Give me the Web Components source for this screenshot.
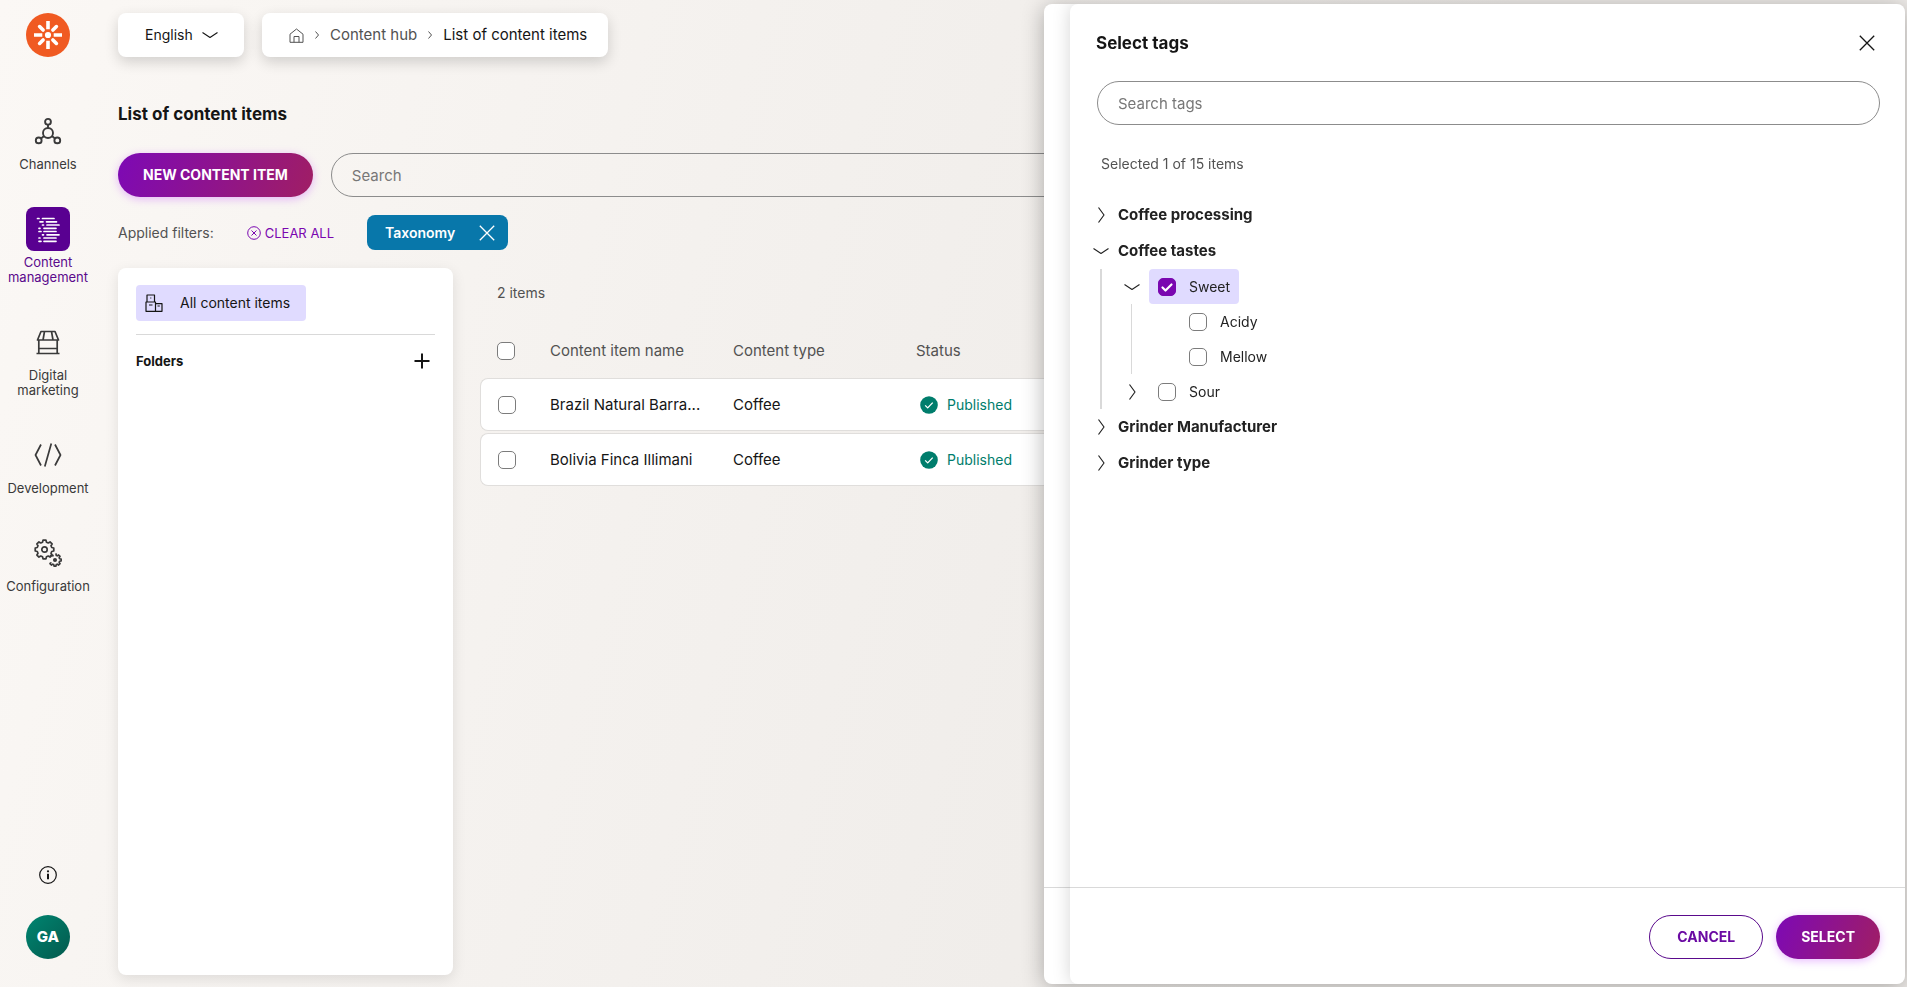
<!DOCTYPE html>
<html lang="en">
<head>
<meta charset="utf-8">
<meta name="viewport" content="width=device-width, initial-scale=1">
<title>List of content items</title>
<style>
    html, body {
        height: 100%;
        margin: 0;
    }
    body {
        --purple: #7a07b0;
        --purple-dark: #5a0a8c;
        --purple-light: #e0dbff;
        --action: linear-gradient(110deg, #7d09b5, #a01e64);
        --text: #151515;
        --text-soft: #525252;
        --line: #d9d9d9;
        --outline: #8c8c8c;
        font: 14px/20px Inter, "Liberation Sans", sans-serif;
        color: var(--text);
        background: linear-gradient(105deg, #fbf8f5, #f4f1ee 35%, #eeebe8 70%);
    }
</style>
</head>
<body>
<app-shell>
    <nav-rail slot="nav">
        <nav-item icon="channels">Channels</nav-item>
        <nav-item icon="content" active>Content management</nav-item>
        <nav-item icon="store">Digital marketing</nav-item>
        <nav-item icon="code">Development</nav-item>
        <nav-item icon="gears">Configuration</nav-item>
        <user-badge slot="bottom">GA</user-badge>
    </nav-rail>

    <top-bar slot="top"></top-bar>
    <span slot="title">List of content items</span>
    <action-button slot="tools">NEW CONTENT ITEM</action-button>
    <search-box slot="tools" label="Search"></search-box>
    <filter-bar slot="filters">
        <filter-chip>Taxonomy</filter-chip>
    </filter-bar>
    <folder-panel slot="content"></folder-panel>
    <content-table slot="content"></content-table>

    <side-drawer slot="drawer">
        <span slot="title">Select tags</span>
        <search-box slot="search" label="Search tags"></search-box>
        <span slot="status">Selected 1 of 15 items</span>
        <tree-node label="Coffee processing" closed></tree-node>
        <tree-node label="Coffee tastes">
            <tree-node label="Sweet" selectable checked>
                <tree-node label="Acidy" selectable leaf></tree-node>
                <tree-node label="Mellow" selectable leaf></tree-node>
            </tree-node>
            <tree-node label="Sour" selectable closed></tree-node>
        </tree-node>
        <tree-node label="Grinder Manufacturer" closed></tree-node>
        <tree-node label="Grinder type" closed></tree-node>
        <action-button slot="footer" kind="outline">CANCEL</action-button>
        <action-button slot="footer">SELECT</action-button>
    </side-drawer>
</app-shell>

<script>
// Outline of a cog wheel, flat teeth, centred on cx/cy
const gearPath = (cx, cy, outer, inner, teeth) => {
    const points = [];
    const step = Math.PI * 2 / teeth;
    for(let i = 0; i < teeth; i++){
        [[-0.34, inner], [-0.2, outer], [0.2, outer], [0.34, inner]].forEach(([shift, radius]) => {
            const angle = (i + shift) * step;
            points.push(`${(cx + Math.sin(angle) * radius).toFixed(2)} ${(cy - Math.cos(angle) * radius).toFixed(2)}`);
        });
    }
    return `M${points.join('L')}Z`;
};

const svg = (size, body, stroke=1, viewBox=`0 0 ${size} ${size}`) => `
<svg width="${size}" height="${size}" viewBox="${viewBox}" fill="none" stroke="currentColor"
    stroke-width="${stroke}" stroke-linejoin="round" aria-hidden="true">${body}</svg>`;

const icons = {
    logo: svg(44, `
        <circle cx="22" cy="22" r="22" fill="#f05a22" stroke="none"/>
        <circle cx="22" cy="22" r="3.1" fill="#fff" stroke="none"/>
        <g stroke="#fff" stroke-width="3.6">
            <path d="M22 8v8.3M22 27.700v8.300M8 22h8.300M27.700 22h8.300"/>
            <path stroke-linecap="round" d="M13.600 13.600l3.500 3.500M26.900 26.900l3.500 3.500M13.600 30.400l3.500-3.500M26.900 17.100l3.500-3.500"/>
        </g>`),
    channels: svg(28, `
        <circle cx="14" cy="16" r="5"/><circle cx="14" cy="4.800" r="2.900"/>
        <circle cx="4.700" cy="23.400" r="2.900"/><circle cx="23.300" cy="23.400" r="2.900"/>
        <path d="M14 7.700V11M10.100 19.100L7 21.600M17.900 19.100L21 21.600"/>`, 1.9),
    content: svg(44, `
        <path stroke-linecap="round" d="M11.500 11.500h1.500M16.500 11.500h11.500M14 14.800h3M20.500 14.800h10
            M16.500 18h1M21 18h12M13 21.300h1M18 21.300h12M13 24.500h2M18 24.500h12
            M16.500 27.800h1M21 27.800h12M13 31h1M18 31h12M13 34.300h2M18 34.300h12"/>`, 1.7),
    store: svg(26, `
        <path d="M6 2.500h14l3.500 8.500h-21zM9.500 2.500L8 11M16.500 2.500L18 11M3.800 11v13.500M22.200 11v13.500M4 19.500h18M1.500 24.500h23"/>`, 1.7),
    code: svg(28, `<path d="M7 3.500L1.500 14 7 24.500M21 3.500L26.500 14 21 24.500M17.300 2.500l-6.500 23"/>`, 1.7),
    gears: svg(28, `
        <path d="${gearPath(10.5, 10.5, 9.4, 7.5, 8)}"/><circle cx="10.500" cy="10.500" r="2.700"/>
        <path d="${gearPath(21, 21, 6.2, 4.8, 8)}" stroke-dasharray="33 9" stroke-dashoffset="-3"/>
        <circle cx="21" cy="21" r="1.200" fill="currentColor"/>`, 1.7),
    info: svg(20, `
        <circle cx="10" cy="10" r="8.300"/><circle cx="10" cy="6.300" r="1.100" fill="currentColor" stroke="none"/>
        <path stroke-width="2" d="M10 8.800v5.400"/>`, 1.2),
    home: svg(15, `<path d="M1 14.300V6.200L7.500 1 14 6.200v8.100zM5 14.300V8.500h5v5.800"/>`, 1),
    down: svg(16, `<path d="M.500 5.500L8 10.500l7.500-5"/>`, 1.1),
    right: svg(16, `<path d="M5.500 .500L11 8l-5.500 7.500"/>`, 1.2),
    crumb: svg(8, `<path d="M2.500 .500L5.500 4l-3 3.500"/>`, 1),
    close: svg(16, `<path d="M.800 .800l14.400 14.400M15.200 .800L.800 15.200"/>`, 1.3),
    clear: svg(14, `<circle cx="7" cy="7" r="6.300"/><path d="M4.500 4.500l5 5M9.500 4.500l-5 5"/>`, 1),
    plus: svg(16, `<path d="M8 .500v15M.500 8h15"/>`, 2),
    boxes: svg(18, `
        <path d="M2 1h7.500v7H2zM1 8h9.500v9.300H1zM10.500 9.700h6.500v7.600h-6.500zM4 11h3.500M12.500 12h2.300M5.300 4h1"/>`, 1.2),
    done: svg(18, `
        <circle cx="9" cy="9" r="8.800" fill="currentColor" stroke="none"/>
        <path stroke="#fff" d="M5.200 9.400l2.500 2.500 5-5.300"/>`, 1.3)
};

// Box look shared by every tick box on the page
const checkboxStyle = `
    input[type=checkbox] {
        appearance: none;
        flex: none;
        width: 18px;
        height: 18px;
        margin: 0;
        border: 1px solid #7c7c7c;
        border-radius: 5px;
        background: #fff;
    }
    input[type=checkbox]:checked {
        border-color: var(--purple);
        background: var(--purple) url('data:image/svg+xml,<svg xmlns="http://www.w3.org/2000/svg" viewBox="0 0 16 16" fill="none" stroke="white" stroke-width="2.200" stroke-linecap="round" stroke-linejoin="round"><path d="M3.500 8.500l3 3 6-6"/></svg>') center / 16px;
    }`;

const resetStyle = `
    * { box-sizing: border-box; }
    svg { display: block; flex: none; }
    button {
        font: inherit;
        color: inherit;
        margin: 0;
        padding: 0;
        border: 0;
        background: none;
        cursor: pointer;
    }
    a { color: inherit; text-decoration: none; }`;

class BaseElement extends HTMLElement {
    constructor(){
        super();
        this.template = document.createElement('template');
        this.attachShadow({mode: 'open'});
    }

    connectedCallback(){
        if(this.isConnected && !this.shadowRoot.hasChildNodes()){
            this.template.innerHTML = `<style>${resetStyle}</style>${this.render()}`;
            this.shadowRoot.append(
                this.template.content.cloneNode(true)
            );
            this.ready();
        }
    }

    ready(){
        // Subclasses add their event listeners here
    }
}

/**
 * AppShell
 * --------
 * Rail on the left, page in the middle and a
 * drawer floating over the right side
 */
class AppShell extends BaseElement {
    render(){
        return `
<style>
    :host {
        display: grid;
        grid-template-columns: 96px minmax(0, 1fr);
        min-height: 100vh;
    }
    main {
        display: flex;
        flex-direction: column;
        padding: 13px 18px 12px 22px;
    }
    h1 {
        margin: 45px 0 27px;
        font-size: 17px;
        line-height: 24px;
        font-weight: 700;
    }
    .tools { display: flex; gap: 18px; }
    .filters { margin: 18px 0; }
    .content { display: flex; flex: 1; gap: 27px; }
</style>
<slot name="nav"></slot>
<main>
    <slot name="top"></slot>
    <h1><slot name="title"></slot></h1>
    <div class="tools"><slot name="tools"></slot></div>
    <div class="filters"><slot name="filters"></slot></div>
    <div class="content"><slot name="content"></slot></div>
</main>
<slot name="drawer"></slot>`;
    }
}

class NavRail extends BaseElement {
    render(){
        return `
<style>
    :host { display: block; }
    nav {
        display: flex;
        flex-direction: column;
        align-items: center;
        height: 100%;
        padding: 13px 0 28px;
    }
    .items {
        display: flex;
        flex-direction: column;
        gap: 35px;
        flex: 1;
        margin-top: 52px;
    }
    .info { margin-bottom: 30px; }
</style>
<nav aria-label="Main">
    <a href="#" aria-label="Dashboard">${icons.logo}</a>
    <div class="items"><slot></slot></div>
    <button class="info" aria-label="About">${icons.info}</button>
    <slot name="bottom"></slot>
</nav>`;
    }
}

class NavItem extends BaseElement {
    render(){
        return `
<style>
    :host {
        display: block;
        width: 90px;
        color: #3a3a3a;
        font-size: 13px;
        line-height: 15px;
        text-align: center;
    }
    :host([active]) { color: var(--purple-dark); }
    a {
        display: flex;
        flex-direction: column;
        align-items: center;
        gap: 4px;
    }
    .tile {
        display: grid;
        place-items: center;
        width: 44px;
        height: 44px;
        border-radius: 8px;
    }
    :host([active]) .tile { color: #fff; background: #590091; }
</style>
<a href="#"><span class="tile">${icons[this.getAttribute('icon')]}</span><span><slot></slot></span></a>`;
    }
}

class UserBadge extends BaseElement {
    render(){
        return `
<style>
    :host { display: block; }
    button {
        width: 44px;
        height: 44px;
        border-radius: 50%;
        color: #fff;
        font-size: 15px;
        font-weight: 800;
        background: linear-gradient(135deg, #008571, #03594d);
    }
</style>
<button><slot></slot></button>`;
    }
}

class TopBar extends BaseElement {
    render(){
        return `
<style>
    :host { display: flex; gap: 18px; }
    .card {
        display: flex;
        align-items: center;
        height: 44px;
        border-radius: 8px;
        background: #fff;
        box-shadow: 0 5px 14px rgba(0, 0, 0, .16);
    }
    .language { display: grid; }
    .language > * { grid-area: 1 / 1; }
    .language svg {
        justify-self: end;
        margin-right: 26px;
        pointer-events: none;
    }
    select {
        appearance: none;
        height: 44px;
        padding: 0 51px 0 27px;
        border: 0;
        color: inherit;
        font: inherit;
        background: none;
    }
    nav {
        padding: 0 21px 0 27px;
        font-size: 15px;
        color: var(--text-soft);
    }
    nav svg { margin: 0 9px; }
    nav a:first-child svg { margin: 0; }
    nav span { color: var(--text); }
</style>
<div class="card language">
    <select aria-label="Language"><option>English</option></select>
    ${icons.down}
</div>
<nav class="card" aria-label="Breadcrumb">
    <a href="#" aria-label="Home">${icons.home}</a>
    ${icons.crumb}
    <a href="#">Content hub</a>
    ${icons.crumb}
    <span aria-current="page">List of content items</span>
</nav>`;
    }
}

class ActionButton extends BaseElement {
    render(){
        return `
<style>
    :host { display: block; flex: none; }
    button {
        height: 44px;
        padding: 0 25px;
        border-radius: 22px;
        color: #fff;
        font-weight: 700;
        background: var(--action);
        box-shadow: 0 2px 8px rgba(190, 60, 255, .35);
    }
    :host([kind=outline]) button {
        padding: 0 27px;
        border: 1px solid var(--purple-dark);
        color: #6b0aa3;
        background: #fff;
        box-shadow: none;
    }
</style>
<button><slot></slot></button>`;
    }
}

class SearchBox extends BaseElement {
    render(){
        const label = this.getAttribute('label');
        return `
<style>
    :host { display: block; flex: 1; }
    input {
        display: block;
        width: 100%;
        height: 44px;
        padding: 0 20px;
        border: 1px solid var(--outline);
        border-radius: 22px;
        color: inherit;
        font: inherit;
        font-size: 15px;
        background: none;
    }
    input::placeholder { color: #777; }
</style>
<input type="search" placeholder="${label}" aria-label="${label}">`;
    }
}

class FilterBar extends BaseElement {
    render(){
        return `
<style>
    :host {
        display: flex;
        align-items: center;
        gap: 33px;
        color: var(--text-soft);
    }
    button {
        display: flex;
        align-items: center;
        gap: 4px;
        color: var(--purple);
        font-size: 13px;
    }
</style>
<span>Applied filters:</span>
<button>${icons.clear}CLEAR ALL</button>
<slot></slot>`;
    }
}

class FilterChip extends BaseElement {
    render(){
        return `
<style>
    :host {
        display: flex;
        align-items: center;
        gap: 24px;
        height: 35px;
        padding: 0 13px 0 18px;
        border-radius: 8px;
        color: #fff;
        font-weight: 600;
        background: #0877aa;
    }
</style>
<slot></slot>
<button aria-label="Remove filter">${icons.close}</button>`;
    }

    ready(){
        this.shadowRoot.querySelector('button').addEventListener('click', () => this.remove());
    }
}

class FolderPanel extends BaseElement {
    render(){
        return `
<style>
    :host {
        flex: none;
        width: 335px;
        box-sizing: border-box;
        padding: 17px 18px;
        border-radius: 8px;
        background: #fff;
        box-shadow: 0 4px 14px rgba(0, 0, 0, .1);
    }
    a {
        display: inline-flex;
        align-items: center;
        gap: 17px;
        height: 36px;
        padding: 0 16px 0 9px;
        border-radius: 4px;
        background: var(--purple-light);
    }
    header {
        display: flex;
        align-items: center;
        justify-content: space-between;
        margin-top: 13px;
        padding: 14px 5px 0 0;
        border-top: 1px solid var(--line);
    }
    h2 {
        margin: 0;
        font-size: 13px;
        line-height: 24px;
        font-weight: 700;
    }
</style>
<a href="#">${icons.boxes}All content items</a>
<header>
    <h2>Folders</h2>
    <button aria-label="New folder">${icons.plus}</button>
</header>`;
    }
}

/**
 * ContentTable
 * ------------
 * Each row is drawn as a separate white card
 */
class ContentTable extends BaseElement {
    get rows(){
        return [
            ['Brazil Natural Barra...', 'Coffee', 'Published'],
            ['Bolivia Finca Illimani', 'Coffee', 'Published']
        ];
    }

    render(){
        const rows = this.rows.map(([name, type, status]) => `
    <tr>
        <td><input type="checkbox" aria-label="Select ${name}"></td>
        <td>${name}</td>
        <td>${type}</td>
        <td><span class="status">${icons.done}${status}</span></td>
    </tr>`).join('');
        return `
<style>
    :host { display: block; flex: 1; font-size: 15px; }
    ${checkboxStyle}
    p {
        margin: 15px 0 21px;
        padding-left: 17px;
        color: var(--text-soft);
        font-size: 14px;
    }
    table {
        width: 100%;
        table-layout: fixed;
        border-collapse: separate;
        border-spacing: 0 2px;
    }
    col.pick { width: 70px; }
    col.text { width: 183px; }
    input { display: block; }
    th {
        height: 50px;
        padding: 0;
        color: var(--text-soft);
        font-weight: 400;
        text-align: left;
    }
    th:first-child, td:first-child { padding-left: 17px; }
    td {
        height: 53px;
        box-sizing: border-box;
        padding: 0;
        border: solid #e0dedc;
        border-width: 1px 0;
        background: #fff;
    }
    td:first-child { border-left-width: 1px; border-radius: 8px 0 0 8px; }
    td:last-child { border-right-width: 1px; border-radius: 0 8px 8px 0; }
    th input { background: none; }
    .status {
        display: flex;
        align-items: center;
        gap: 9px;
        padding-left: 4px;
        color: #007d6c;
        font-size: 14px;
    }
</style>
<p>2 items</p>
<table>
    <colgroup><col class="pick"><col class="text"><col class="text"><col></colgroup>
    <thead>
        <tr>
            <th><input type="checkbox" aria-label="Select all"></th>
            <th>Content item name</th>
            <th>Content type</th>
            <th>Status</th>
        </tr>
    </thead>
    <tbody>${rows}</tbody>
</table>`;
    }
}

/**
 * SideDrawer
 * ----------
 * Two stacked sheets; only the edge of the
 * back one can be seen
 */
class SideDrawer extends BaseElement {
    render(){
        return `
<style>
    :host {
        position: fixed;
        inset: 4px 2px 3px auto;
        display: flex;
        width: 861px;
        max-width: 100%;
        overflow: hidden;
        border-radius: 8px;
        background: #fff;
        box-shadow: 0 3px 22px rgba(0, 0, 0, .3);
    }
    .back {
        display: flex;
        align-items: flex-end;
        width: 26px;
    }
    .back::after {
        content: "";
        flex: 1;
        height: 97px;
        border-top: 1px solid var(--line);
        box-sizing: border-box;
    }
    section {
        display: flex;
        flex: 1;
        flex-direction: column;
        border-radius: 8px;
        background: #fff;
        box-shadow: 0 0 18px rgba(0, 0, 0, .17);
    }
    header {
        display: flex;
        align-items: center;
        justify-content: space-between;
        padding: 27px 30px 0 26px;
    }
    h2 {
        margin: 0;
        font-size: 17px;
        line-height: 24px;
        font-weight: 700;
    }
    .search { padding: 26px 25px 0 27px; }
    .status { padding: 29px 31px 0; color: var(--text-soft); }
    .tree { flex: 1; padding: 23px 23px 0; overflow: auto; }
    footer {
        display: flex;
        justify-content: flex-end;
        gap: 13px;
        padding: 27px 25px 25px;
        border-top: 1px solid var(--line);
    }
</style>
<div class="back"></div>
<section role="dialog" aria-label="Select tags">
    <header>
        <h2><slot name="title"></slot></h2>
        <button aria-label="Close">${icons.close}</button>
    </header>
    <div class="search"><slot name="search"></slot></div>
    <div class="status"><slot name="status"></slot></div>
    <div class="tree" role="tree"><slot></slot></div>
    <footer><slot name="footer"></slot></footer>
</section>`;
    }
}

class TreeNode extends BaseElement {
    constructor(){
        super();

        // Bind methods
        this.toggle = this.toggle.bind(this);
    }

    render(){
        const label = this.getAttribute('label');
        const checked = this.hasAttribute('checked') ? 'checked' : '';
        const toggle = this.hasAttribute('leaf') ? '<span class="toggle"></span>' : `
    <button class="toggle" aria-label="Toggle ${label}">
        <span class="opened">${icons.down}</span><span class="shut">${icons.right}</span>
    </button>`;
        const text = this.hasAttribute('selectable')
            ? `<label><input type="checkbox" ${checked}>${label}</label>`
            : `<strong>${label}</strong>`;
        return `
<style>
    :host { display: block; }
    ${checkboxStyle}
    .row {
        display: flex;
        align-items: center;
        gap: 9px;
        height: 36px;
        color: #222;
    }
    :host([selectable]) .row { height: 35px; }
    .toggle { width: 16px; }
    strong { font-size: 15px; font-weight: 700; }
    label {
        display: flex;
        align-items: center;
        gap: 13px;
        height: 35px;
        padding: 0 9px;
        border-radius: 4px;
    }
    label:has(:checked) { background: var(--purple-light); }
    .children {
        margin-left: 7px;
        padding-left: 22px;
        border-left: 2px solid var(--line);
    }
    :host([selectable]) .children { padding-left: 23px; border-left-width: 1px; }
    :host([leaf]) .children, :host([closed]) .children { display: none; }
    .shut, :host([closed]) .opened { display: none; }
    :host([closed]) .shut { display: block; }
</style>
<div class="row">${toggle}${text}</div>
<div class="children"><slot></slot></div>`;
    }

    ready(){
        const button = this.shadowRoot.querySelector('button');
        if(button){
            button.addEventListener('click', this.toggle);
        }
    }

    toggle(){
        this.toggleAttribute('closed');
    }
}

window.customElements.define('app-shell', AppShell);
window.customElements.define('nav-rail', NavRail);
window.customElements.define('nav-item', NavItem);
window.customElements.define('user-badge', UserBadge);
window.customElements.define('top-bar', TopBar);
window.customElements.define('action-button', ActionButton);
window.customElements.define('search-box', SearchBox);
window.customElements.define('filter-bar', FilterBar);
window.customElements.define('filter-chip', FilterChip);
window.customElements.define('folder-panel', FolderPanel);
window.customElements.define('content-table', ContentTable);
window.customElements.define('side-drawer', SideDrawer);
window.customElements.define('tree-node', TreeNode);
</script>
</body>
</html>
